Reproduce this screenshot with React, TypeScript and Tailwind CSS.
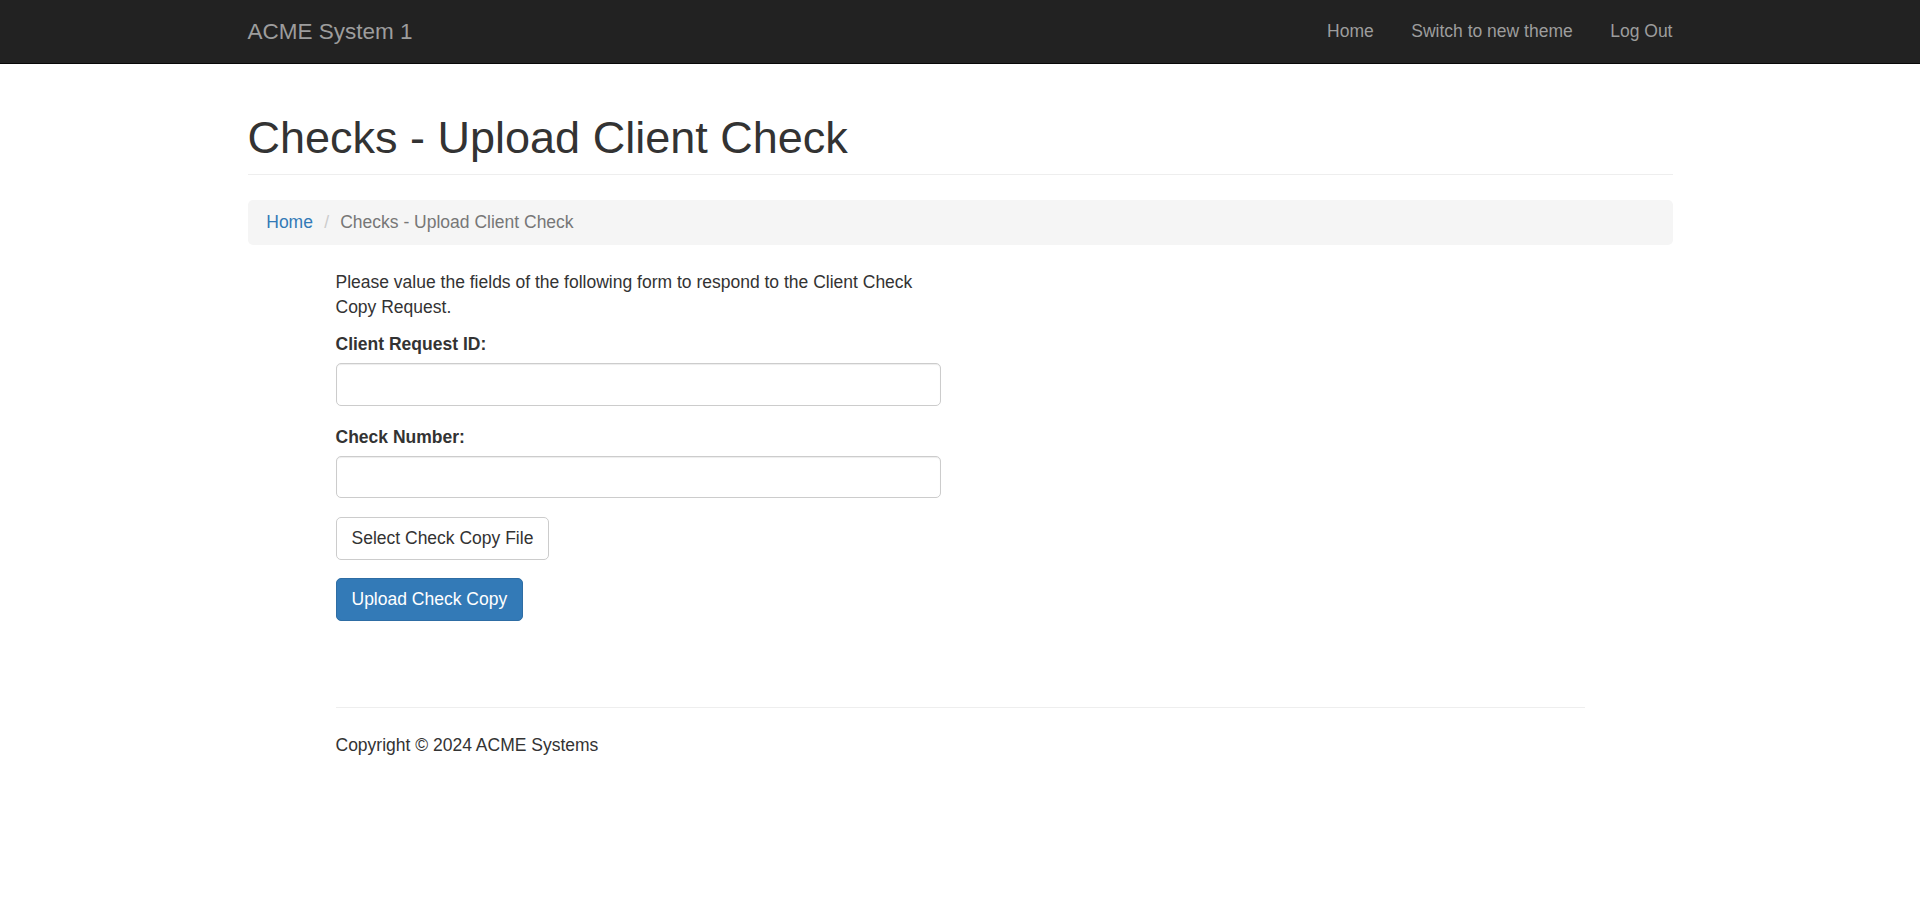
import React from "react";

export default function App() {
  const font = { fontFamily: '"Liberation Sans", Arial, Helvetica, sans-serif' };
  return (
    <div className="min-h-[912px] bg-white text-[#333] text-[17.5px] leading-[25px]" style={font}>
      <nav className="bg-[#222] border-b border-[#080808] h-[64px]">
        <div className="w-[1425px] mx-auto flex items-center justify-between h-[63px]">
          <a className="text-[22.5px] leading-[25px] text-[#9d9d9d]">ACME System 1</a>
          <ul className="flex -mr-[18.75px]">
            <li><a className="block px-[18.75px] text-[#9d9d9d]">Home</a></li>
            <li><a className="block px-[18.75px] text-[#9d9d9d]">Switch to new theme</a></li>
            <li><a className="block px-[18.75px] text-[#9d9d9d]">Log Out</a></li>
          </ul>
        </div>
      </nav>

      <div className="w-[1425px] mx-auto">
        <div className="mt-[49px] pb-[11px] border-b border-[#eee]">
          <h1 className="text-[45px] leading-[49.5px] font-medium text-[#333]">Checks - Upload Client Check</h1>
        </div>
        <div className="mt-[25px] bg-[#f5f5f5] rounded-[5px] px-[18.75px] py-[10px] h-[45px] flex items-center">
          <a className="text-[#337ab7]">Home</a>
          <span className="ml-[5px] pl-[6.25px] pr-[6.25px] text-[#ccc] whitespace-pre">{"/\u00a0"}</span>
          <span className="text-[#777]">Checks - Upload Client Check</span>
        </div>
      </div>

      <div className="w-[1249px] mx-auto">
        <div className="w-[605px] mt-[25px]">
          <p className="mb-[12.5px]">
            Please value the fields of the following form to respond to the Client Check Copy Request.
          </p>
          <div className="mb-[18.75px]">
            <label className="block font-bold mb-[6.25px]">Client Request ID:</label>
            <input className="block w-full h-[42.5px] border border-[#ccc] rounded-[5px] px-[15px] shadow-[inset_0_1px_1px_rgba(0,0,0,0.075)] outline-none" />
          </div>
          <div className="mb-[18.75px]">
            <label className="block font-bold mb-[6.25px]">Check Number:</label>
            <input className="block w-full h-[42.5px] border border-[#ccc] rounded-[5px] px-[15px] shadow-[inset_0_1px_1px_rgba(0,0,0,0.075)] outline-none" />
          </div>
          <div className="mb-[18.75px]">
            <button className="h-[42.5px] px-[15px] bg-white border border-[#ccc] rounded-[5px] text-[#333]">Select Check Copy File</button>
          </div>
          <div>
            <button className="h-[42.5px] px-[15px] bg-[#337ab7] border border-[#2e6da4] rounded-[5px] text-white">Upload Check Copy</button>
          </div>
        </div>
        <hr className="mt-[86px] border-0 border-t border-[#eee]" />
        <p className="mt-[25px]">Copyright © 2024 ACME Systems</p>
      </div>
    </div>
  );
}
